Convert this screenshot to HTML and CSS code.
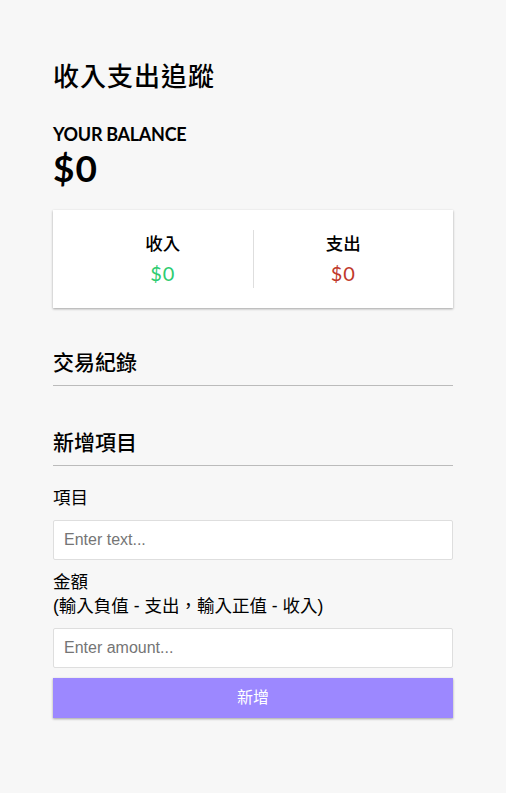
FILE: index.html
```html
<!DOCTYPE html>
<html lang="zh-Hant">
<head>
<meta charset="utf-8">
<title>收入支出追蹤</title>
<link rel="stylesheet" href="styles.css">
</head>
<body>
  <div class="page">
    <h2 class="title">收入支出追蹤</h2>
    <div class="container">
      <h4 class="balance-label">Your Balance</h4>
      <h1 class="balance">$0</h1>

      <div class="inc-exp">
        <div class="inc-exp-item inc-exp-item--first">
          <h4 class="inc-exp-title">收入</h4>
          <p class="money money--plus">$0</p>
        </div>
        <div class="inc-exp-item">
          <h4 class="inc-exp-title">支出</h4>
          <p class="money money--minus">$0</p>
        </div>
      </div>

      <h3 class="section-title">交易紀錄</h3>
      <ul class="list"></ul>

      <h3 class="section-title">新增項目</h3>
      <form class="form">
        <div class="form-control">
          <label class="label" for="text">項目</label>
          <input class="input" type="text" id="text" placeholder="Enter text...">
        </div>
        <div class="form-control">
          <label class="label" for="amount">金額<br>(輸入負值 - 支出，輸入正值 - 收入)</label>
          <input class="input" type="number" id="amount" placeholder="Enter amount...">
        </div>
        <button class="btn" type="button">新增</button>
      </form>
    </div>
  </div>
</body>
</html>
```

FILE: styles.css
```css
* {
  box-sizing: border-box;
}

body {
  margin: 0;
  background-color: #f7f7f7;
  font-family: Lato, "Noto Sans CJK TC", sans-serif;
  color: #000;
}

.page {
  width: 400px;
  margin: 0 auto;
  padding-top: 57px;
}

.title {
  margin: 0;
  font-family: "Noto Sans CJK TC", sans-serif;
  font-size: 26px;
  font-weight: 500;
  letter-spacing: 1px;
  line-height: 36px;
}

.container {
  margin: 30px 0;
}

.balance-label {
  margin: 0;
  font-size: 18px;
  line-height: 22px;
  text-transform: uppercase;
  letter-spacing: -0.3px;
}

.balance {
  margin: 0;
  font-size: 37px;
  line-height: 45px;
  letter-spacing: 1px;
}

.inc-exp {
  background-color: #fff;
  box-shadow: 0 1px 3px rgba(0, 0, 0, 0.12), 0 1px 2px rgba(0, 0, 0, 0.24);
  padding: 20px;
  display: flex;
  justify-content: space-between;
  margin: 20px 0;
}

.inc-exp-item {
  flex: 1;
  text-align: center;
}

.inc-exp-item--first {
  border-right: 1px solid #dedede;
}

.inc-exp-title {
  margin: 0;
  font-family: "Noto Sans CJK TC", sans-serif;
  font-size: 17.5px;
  font-weight: 500;
  line-height: 26px;
}

.money {
  font-size: 20px;
  letter-spacing: 1px;
  margin: 2px 0 0;
  line-height: 30px;
}

.money--plus {
  color: #2ecc71;
}

.money--minus {
  color: #c0392b;
}

.section-title {
  border-bottom: 1px solid #bbb;
  padding-bottom: 10px;
  margin: 40px 0 10px;
  font-family: "Noto Sans CJK TC", sans-serif;
  font-size: 21px;
  font-weight: 500;
  line-height: 27px;
}

.list {
  margin: 0 0 42px;
  padding: 0;
  list-style: none;
}

.form-control {
  display: block;
}

.label {
  display: inline-block;
  margin: 10px 0;
  font-family: "Liberation Sans", "Noto Sans CJK TC", sans-serif;
  font-size: 17.5px;
  line-height: 24px;
  vertical-align: top;
}

.input {
  display: block;
  width: 100%;
  border: 1px solid #dedede;
  border-radius: 2px;
  padding: 10px;
  font-family: "Liberation Sans", "Noto Sans CJK TC", sans-serif;
  font-size: 16px;
  line-height: 18px;
  background: #fff;
}

.input::placeholder {
  color: #757575;
}

.btn {
  cursor: pointer;
  display: block;
  width: 100%;
  background-color: #9c88ff;
  box-shadow: 0 1px 3px rgba(0, 0, 0, 0.12), 0 1px 2px rgba(0, 0, 0, 0.24);
  color: #fff;
  border: 0;
  font-family: "Liberation Sans", "Noto Sans CJK TC", sans-serif;
  font-size: 16px;
  line-height: 20px;
  margin: 10px 0 30px;
  padding: 10px;
}
```
